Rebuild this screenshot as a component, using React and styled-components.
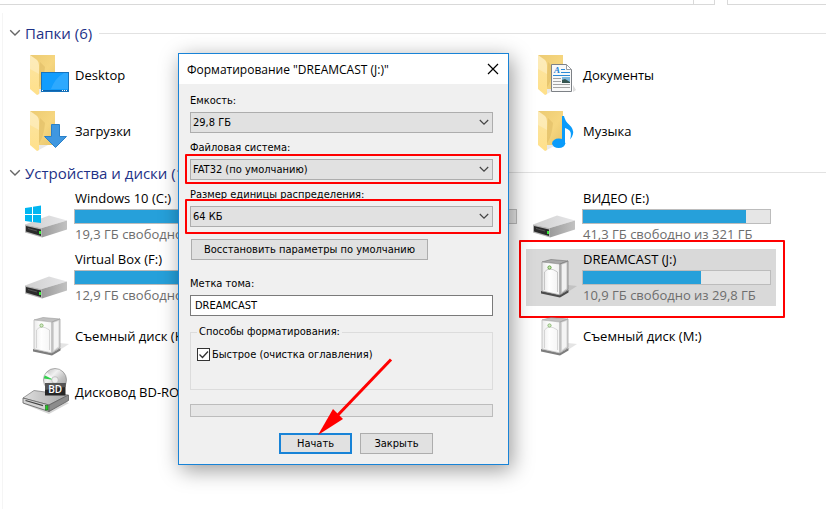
import React, { useState } from 'react'
import styled, { createGlobalStyle } from 'styled-components'

const GlobalStyle = createGlobalStyle`
  * {
    box-sizing: border-box;
  }
  body {
    margin: 0;
    background: #fff;
    color: #000;
    font-family: "Open Sans", "Noto Sans", sans-serif;
    font-size: 13px;
  }
  button, input, select {
    font: inherit;
    color: inherit;
  }
`

const Explorer = styled.main`
  position: relative;
  min-height: 100vh;
  overflow: hidden;
`

const TopBar = styled.div`
  display: flex;
  gap: 12px;
  height: 5px;
`

const AddressBar = styled.div`
  flex: 1;
  display: flex;
  justify-content: flex-end;
  border: 1px solid #d9d9d9;
  border-top: 0;
  border-left: 0;
`

const RefreshCell = styled.div`
  width: 21px;
  border-left: 1px solid #d9d9d9;
`

const SearchBar = styled.div`
  width: 99px;
  border: 1px solid #d9d9d9;
  border-width: 0 0 1px 1px;
`

const Content = styled.div`
  margin: 8px 0 0 2px;
  padding: 4px 0 0 6px;
  min-height: 496px;
  border-left: 1px solid #f5f5f5;
`

const GroupHeader = styled.button`
  display: flex;
  align-items: center;
  width: 100%;
  height: ${(p) => p.$height}px;
  padding: 0;
  border: 0;
  background: none;
  color: #1e3287;
  font-size: 15px;
  line-height: 22px;
  text-align: left;

  svg {
    flex: none;
    margin-right: 4px;
  }

  &::after {
    content: "";
    flex: 1;
    height: 1px;
    margin-left: 7px;
    background: #e2e2e2;
  }
`

const Tiles = styled.div`
  display: grid;
  grid-template-columns: repeat(3, 250px);
  gap: 4px;
  padding: 0 0 0 9px;
`

const TileBox = styled.div`
  position: relative;
  grid-column: ${(p) => p.$col};
  display: flex;
  align-items: center;
  min-height: 52px;
  padding: 0 5px 0 4px;
  background: ${(p) => (p.$selected ? '#d9d9d9' : 'transparent')};

  > svg {
    flex: none;
    margin-right: 4px;
  }
`

const TileText = styled.div`
  flex: 1;
  min-width: 0;
`

const TileName = styled.div`
  padding-left: 1px;
  line-height: 21px;
  white-space: nowrap;
`

const TileFree = styled(TileName)`
  min-height: 21px;
  color: #6d6d6d;
`

const Meter = styled.div`
  height: 15px;
  border: 1px solid #bcbcbc;
  background: #e6e6e6;
`

const MeterFill = styled.div`
  height: 100%;
  background: #26a0da;
`

// red frame drawn around the thing the reader has to look at
const Frame = styled.span`
  position: absolute;
  inset: ${(p) => p.$inset};
  border: 2px solid #f00;
  border-radius: 1px;
  pointer-events: none;
`

const Dialog = styled.form`
  position: absolute;
  top: 53px;
  left: 178px;
  width: 331px;
  border: 1px solid #1883d7;
  background: #f0f0f0;
  box-shadow: 3px 5px 20px rgba(0, 0, 0, 0.4);
  font-family: "DejaVu Sans Condensed", "DejaVu Sans", sans-serif;
  font-stretch: condensed;
  font-size: 11px;
`

const TitleBar = styled.header`
  display: flex;
  align-items: center;
  justify-content: space-between;
  height: 30px;
  padding: 0 9px 0 8px;
  background: #fff;
`

const Title = styled.h1`
  margin: 0;
  font-family: "Open Sans", "Noto Sans", sans-serif;
  font-stretch: normal;
  font-size: 12px;
  font-weight: 400;
`

const CloseButton = styled.button`
  display: flex;
  padding: 0;
  border: 0;
  background: none;
`

const DialogBody = styled.div`
  padding: 10px 15px 10px 11px;
`

const Field = styled.div`
  margin-bottom: 8px;
`

const Label = styled.label`
  display: block;
  height: 18px;
  line-height: 14px;
  white-space: nowrap;
`

const SelectWrap = styled.div`
  position: relative;
  display: flex;

  > svg {
    position: absolute;
    top: 7px;
    right: 4px;
    pointer-events: none;
  }
`

const Select = styled.select`
  appearance: none;
  width: 100%;
  height: 21px;
  padding: 0 20px 0 2px;
  border: 1px solid #adadad;
  border-radius: 0;
  background: #e1e1e1;
`

const Button = styled.button`
  width: ${(p) => p.$width}px;
  height: 21px;
  padding: 0;
  border: ${(p) => (p.$primary ? '2px solid #1883d7' : '1px solid #adadad')};
  background: #e1e1e1;
  line-height: 16px;
  white-space: nowrap;
`

const ResetRow = styled.div`
  display: flex;
  padding: 4px 1px 17px;
`

const TextInput = styled.input`
  display: block;
  width: 100%;
  height: 21px;
  padding: 0 4px;
  border: 1px solid #7a7a7a;
  background: #fff;
`

const Options = styled.fieldset`
  height: 66px;
  margin: 0 0 14px;
  padding: 0 6px;
  border: 1px solid #dcdcdc;
`

const Legend = styled.legend`
  padding: 0 2px;
  line-height: 16px;
`

const CheckLabel = styled.label`
  position: relative;
  display: flex;
  align-items: center;
  gap: 2px;
  height: 13px;
  margin-top: 8px;

  > svg {
    position: absolute;
    top: 2px;
    left: 2px;
    pointer-events: none;
  }
`

const Checkbox = styled.input`
  appearance: none;
  width: 13px;
  height: 13px;
  margin: 0;
  border: 1px solid #333;
  background: #fff;

  &:not(:checked) + svg {
    display: none;
  }
`

const FormatProgress = styled.div`
  height: 13px;
  margin-bottom: 16px;
  border: 1px solid #bcbcbc;
  background: #e6e6e6;
`

const Actions = styled.div`
  display: flex;
  gap: 8px;
  padding-left: 89px;
`

const Arrow = styled.svg`
  position: absolute;
  top: 356px;
  left: 316px;
  pointer-events: none;
`

const Chevron = ({ width = 10, color = '#444' }) => (
  <svg width={width} height={width === 10 ? 7 : 8} viewBox="0 0 10 7" fill="none" stroke={color} strokeWidth="1.2">
    <path d="M.8 1 L5 5.2 L9.2 1" />
  </svg>
)

const Folder = ({ children }) => (
  <svg width="48" height="48" viewBox="0 0 48 48">
    <defs>
      <linearGradient id="back" x1="0" y1="0" x2="1" y2="1">
        <stop offset="0" stopColor="#eccb73" />
        <stop offset=".55" stopColor="#f6d67f" />
        <stop offset="1" stopColor="#e6c46c" />
      </linearGradient>
      <linearGradient id="flap" x1="0" y1="0" x2="0" y2="1">
        <stop offset="0" stopColor="#fbe5a4" />
        <stop offset="1" stopColor="#ffe08a" />
      </linearGradient>
    </defs>
    <path d="M15 44 L26 38 H16Z" fill="#e9e9e9" />
    <path d="M8 4 H33 V38 H14Z" fill="url(#back)" />
    <path d="M16 38 Q22 30 23 16 L18 11Z" fill="#dfbd66" opacity=".6" />
    <path d="M8 4 L15 9 Q17 11 17 14 V43 L15 44 L8 38Z" fill="url(#flap)" />
    <path d="M8 4 L15 9 Q17 11 17 14 V23 L8 18Z" fill="#fff" opacity=".25" />
    {children}
  </svg>
)

const DesktopIcon = () => (
  <Folder>
    <rect x="19.5" y="21.5" width="27" height="19" fill="#119dfd" stroke="#1673bd" />
    <path d="M46 22 V38 H29 Q33 27 42 22Z" fill="#3dafff" opacity=".65" />
    <path d="M20 39.5 H46" stroke="#0b63ad" />
    <path d="M20 39.5h1M40 39.5h1M42 39.5h1M44 39.5h1" stroke="#fff" />
  </Folder>
)

const DownloadIcon = () => (
  <Folder>
    <path d="M29.5 17.5 H37.5 V29.5 H44.5 L33.5 40.5 L22.5 29.5 H29.5Z" fill="#3f97e0" stroke="#2a80c8" />
  </Folder>
)

const DocumentIcon = () => (
  <Folder>
    <path d="M43 41 L46 39 L43 34Z" fill="#ddd" />
    <path d="M21.5 13.5 H36.5 L41.5 18.5 V40.5 H21.5Z" fill="#f8f8f8" stroke="#7d8186" />
    <path d="M36.5 13.5 V18.5 H41.5Z" fill="#fff" stroke="#9a9da1" />
    <text x="24" y="22" fontFamily="Liberation Serif, serif" fontSize="9" fontWeight="700" fontStyle="italic" fill="#1d7fd1">A</text>
    <path d="M31 18.5 H35 M31 21.5 H40 M23 24.5 H40" stroke="#2d8ad6" />
    <path d="M23 27.5h8M23 30.5h8M23 33.5h17M23 36.5h17" stroke="#a3a3a3" />
    <rect x="32" y="26" width="8" height="6" fill="#7fb7dd" />
    <path d="M32 32 V29 L35 28 L40 31 V32Z" fill="#34544f" />
  </Folder>
)

const MusicIcon = () => (
  <Folder>
    <ellipse cx="28.7" cy="36.3" rx="6.6" ry="4.8" fill="#0a9bfa" />
    <path d="M32 9 H34 Q35 14 39 17.5 Q44 22 43 27 Q42 31 40 32.5 Q42 26 39.5 23.5 Q37.5 21.5 35 21 V36 H32Z" fill="#0a9bfa" />
  </Folder>
)

const DriveIcon = ({ system }) => (
  <svg width="48" height="48" viewBox="0 0 48 48">
    <defs>
      <linearGradient id="driveTop" x1="0" y1="0" x2="1" y2="0">
        <stop offset="0" stopColor="#cfcfcf" />
        <stop offset="1" stopColor="#e6e6e8" />
      </linearGradient>
      <linearGradient id="driveSide" x1="0" y1="0" x2="1" y2="0">
        <stop offset="0" stopColor="#9b9b9b" />
        <stop offset="1" stopColor="#c2c2c2" />
      </linearGradient>
    </defs>
    <path d="M3 31.5 L27 22.5 L45 27.5 L20 35Z" fill="url(#driveTop)" />
    <path d="M20 35 L45 27.5 V36.5 L20 44.5Z" fill="url(#driveSide)" />
    <path d="M3 31.5 L20 35 V44.5 L3 39.5Z" fill="#b5b5b5" />
    <path d="M4 33 L19 36.5 V43 L4 38.5Z" fill="#2b2b2b" />
    <path d="M6 35.5 L15 38" stroke="#555" />
    <rect x="17" y="38" width="2" height="3" fill="#3be83b" />
    {system && <path d="M3 15 L10 14 V21 H3Z M11 13.8 L19 12.5 V21 H11Z M3 22 H10 V29 L3 28Z M11 22 H19 V30 L11 29Z" fill="#00b6f1" />}
  </svg>
)

const RemovableIcon = ({ selected }) => (
  <svg width="48" height="48" viewBox="0 0 48 48" opacity={selected ? 1 : 0.72}>
    <defs>
      <linearGradient id="boxFront" x1="0" y1="0" x2="1" y2="0">
        <stop offset="0" stopColor="#e4e4e4" />
        <stop offset=".4" stopColor="#fff" />
        <stop offset="1" stopColor="#f0f0f0" />
      </linearGradient>
    </defs>
    <path d="M30 43 L47 32 L38 31Z" fill="#999" opacity=".35" />
    <path d="M11 37 L30 41 L38.5 36 V38.5 L30 43.5 L11 39.5Z" fill="#4c4c4c" />
    <path d="M12 8 L21 5.5 L38 7 L30 10Z" fill="#a9a9a9" stroke="#777" strokeWidth=".6" />
    <path d="M12 8 L30 10 V41 L12 37Z" fill="url(#boxFront)" stroke="#999" strokeWidth=".7" />
    <path d="M30 10 L38 7 V35.5 L30 41Z" fill="#c6c6c6" stroke="#777" strokeWidth=".7" />
    <path d="M32 10.5 L36.5 9 V34.5 L32 38Z" fill="#fff" opacity=".75" />
    <path d="M14.5 18 Q19 12 27.5 18 V38 M14.5 18 V36" fill="none" stroke="#b5b5b5" strokeWidth=".7" />
    <circle cx="19.5" cy="13.5" r="1.6" fill="#c9e8b5" stroke="#5f9d3f" />
  </svg>
)

const BdIcon = () => (
  <svg width="48" height="48" viewBox="0 0 48 48">
    <defs>
      <linearGradient id="disc" x1="0" y1="0" x2="1" y2="1">
        <stop offset="0" stopColor="#b3b3b3" />
        <stop offset=".35" stopColor="#f1f1f1" />
        <stop offset=".6" stopColor="#c4c4c4" />
        <stop offset="1" stopColor="#989898" />
      </linearGradient>
      <linearGradient id="tray" x1="0" y1="0" x2="1" y2="0">
        <stop offset="0" stopColor="#dedede" />
        <stop offset="1" stopColor="#a6a6a6" />
      </linearGradient>
    </defs>
    <path d="M2 36 L27 46 L47 35 L40 33Z" fill="#888" opacity=".35" />
    <path d="M1 30 L12 22.5 L46 27 L27 37Z" fill="url(#tray)" stroke="#777" strokeWidth=".7" />
    <path d="M1 30 L27 37 V43.5 L1 35Z" fill="#d5d5d5" stroke="#5e5e5e" strokeWidth=".8" />
    <path d="M27 37 L46.5 27 V32.5 L27 43.5Z" fill="#8c8c8c" stroke="#5e5e5e" strokeWidth=".8" />
    <path d="M3.5 32.5 L21 37.7" stroke="#444" strokeWidth="1.2" />
    <rect x="23.5" y="37.5" width="2.5" height="4.5" fill="#26c926" stroke="#176b17" strokeWidth=".6" />
    <circle cx="33" cy="12" r="11.5" fill="url(#disc)" stroke="#8b8b8b" strokeWidth=".7" />
    <path d="M33 12 L22 9 Q23 6 25 4.5Z" fill="#fff" opacity=".7" />
    <path d="M32 12 L22 10.5 Q22 8 23 7.5Z" fill="#31cf4d" />
    <circle cx="33" cy="12" r="3.3" fill="#eee" stroke="#aaa" strokeWidth=".6" />
    <rect x="23" y="15" width="20.5" height="12.5" fill="#262626" />
    <path d="M23 15 H43.5 V19 L23 22Z" fill="#555" />
    <text x="33.2" y="24.8" textAnchor="middle" fontFamily="Open Sans, sans-serif" fontSize="10" fontWeight="600" fill="#fff">BD</text>
  </svg>
)

const icons = {
  desktop: <DesktopIcon />,
  download: <DownloadIcon />,
  document: <DocumentIcon />,
  music: <MusicIcon />,
  system: <DriveIcon system />,
  drive: <DriveIcon />,
  removable: <RemovableIcon />,
  target: <RemovableIcon selected />,
  bd: <BdIcon />,
}

const folders = [
  { name: 'Desktop', icon: 'desktop', col: 1 },
  { name: 'Документы', icon: 'document', col: 3 },
  { name: 'Загрузки', icon: 'download', col: 1 },
  { name: 'Музыка', icon: 'music', col: 3 },
]

const drives = [
  { name: 'Windows 10 (C:)', icon: 'system', col: 1, used: 80, free: '19,3 ГБ свободно' },
  { icon: 'drive', col: 2, used: 60 },
  { name: 'ВИДЕО (E:)', icon: 'drive', col: 3, used: 87, free: '41,3 ГБ свободно из 321 ГБ' },
  { name: 'Virtual Box (F:)', icon: 'drive', col: 1, used: 80, free: '12,9 ГБ свободно' },
  { name: 'DREAMCAST (J:)', icon: 'target', col: 3, used: 63, free: '10,9 ГБ свободно из 29,8 ГБ', selected: true },
  { name: 'Съемный диск (K:)', icon: 'removable', col: 1 },
  { name: 'Съемный диск (M:)', icon: 'removable', col: 3 },
  { name: 'Дисковод BD-ROM', icon: 'bd', col: 1 },
]

const Tile = ({ item }) => {
  const { name, icon, col, used, free, selected } = item
  return (
    <TileBox $col={col} $selected={selected}>
      {icons[icon]}
      <TileText>
        <TileName>{name || '\u00a0'}</TileName>
        {used && <Meter><MeterFill style={{ width: `${used}%` }} /></Meter>}
        {used && <TileFree>{free}</TileFree>}
      </TileText>
      {selected && <Frame $inset="-9px -9px -12px -7px" />}
    </TileBox>
  )
}

const Group = ({ title, items, height }) => {
  const [open, setOpen] = useState(true)
  return (
    <section>
      <GroupHeader type="button" $height={height} aria-expanded={open} onClick={() => setOpen(!open)}>
        <Chevron width={12} color="#666" />
        {title}
      </GroupHeader>
      {open && <Tiles>{items.map((item, i) => <Tile key={i} item={item} />)}</Tiles>}
    </section>
  )
}

const SelectField = ({ id, label, value, frame }) => (
  <Field>
    <Label htmlFor={id}>{label}</Label>
    <SelectWrap>
      <Select id={id} defaultValue={value}>
        <option>{value}</option>
      </Select>
      <Chevron />
      {frame && <Frame $inset={frame} />}
    </SelectWrap>
  </Field>
)

const FormatDialog = () => (
  <Dialog onSubmit={(e) => e.preventDefault()}>
    <TitleBar>
      <Title>Форматирование "DREAMCAST (J:)"</Title>
      <CloseButton type="button" aria-label="Закрыть окно">
        <svg width="12" height="12" viewBox="0 0 12 12" stroke="#000" strokeWidth="1.2">
          <path d="M1 1 L11 11 M11 1 L1 11" />
        </svg>
      </CloseButton>
    </TitleBar>
    <DialogBody>
      <SelectField id="capacity" label="Емкость:" value="29,8 ГБ" />
      <SelectField id="fs" label="Файловая система:" value="FAT32 (по умолчанию)" frame="-5px -8px -4px -5px" />
      <SelectField id="unit" label="Размер единицы распределения:" value="64 КБ" frame="-7px -8px -7px -5px" />
      <ResetRow>
        <Button type="button" $width={237}>Восстановить параметры по умолчанию</Button>
      </ResetRow>
      <Field>
        <Label htmlFor="volume">Метка тома:</Label>
        <TextInput id="volume" defaultValue="DREAMCAST" />
      </Field>
      <Options>
        <Legend>Способы форматирования:</Legend>
        <CheckLabel>
          <Checkbox type="checkbox" defaultChecked />
          <svg width="10" height="9" viewBox="0 0 10 9" fill="none" stroke="#333" strokeWidth="1.3">
            <path d="M.5 4.5 L3.5 7.5 L9 1.5" />
          </svg>
          Быстрое (очистка оглавления)
        </CheckLabel>
      </Options>
      <FormatProgress />
      <Actions>
        <Button type="submit" $width={73} $primary>Начать</Button>
        <Button type="button" $width={73}>Закрыть</Button>
      </Actions>
    </DialogBody>
  </Dialog>
)

const App = () => (
  <>
    <GlobalStyle />
    <Explorer>
      <TopBar>
        <AddressBar><RefreshCell /></AddressBar>
        <SearchBar />
      </TopBar>
      <Content>
        <Group title="Папки (6)" items={folders} height={32} />
        <Group title="Устройства и диски (10)" items={drives} height={31} />
      </Content>
      <FormatDialog />
      <Arrow width="80" height="82" viewBox="0 0 80 82">
        <path d="M75 3.5 L20 61" stroke="#f00" strokeWidth="3" />
        <path d="M2 79 L17 53 L27 63Z" fill="#f00" />
      </Arrow>
    </Explorer>
  </>
)

export default App
